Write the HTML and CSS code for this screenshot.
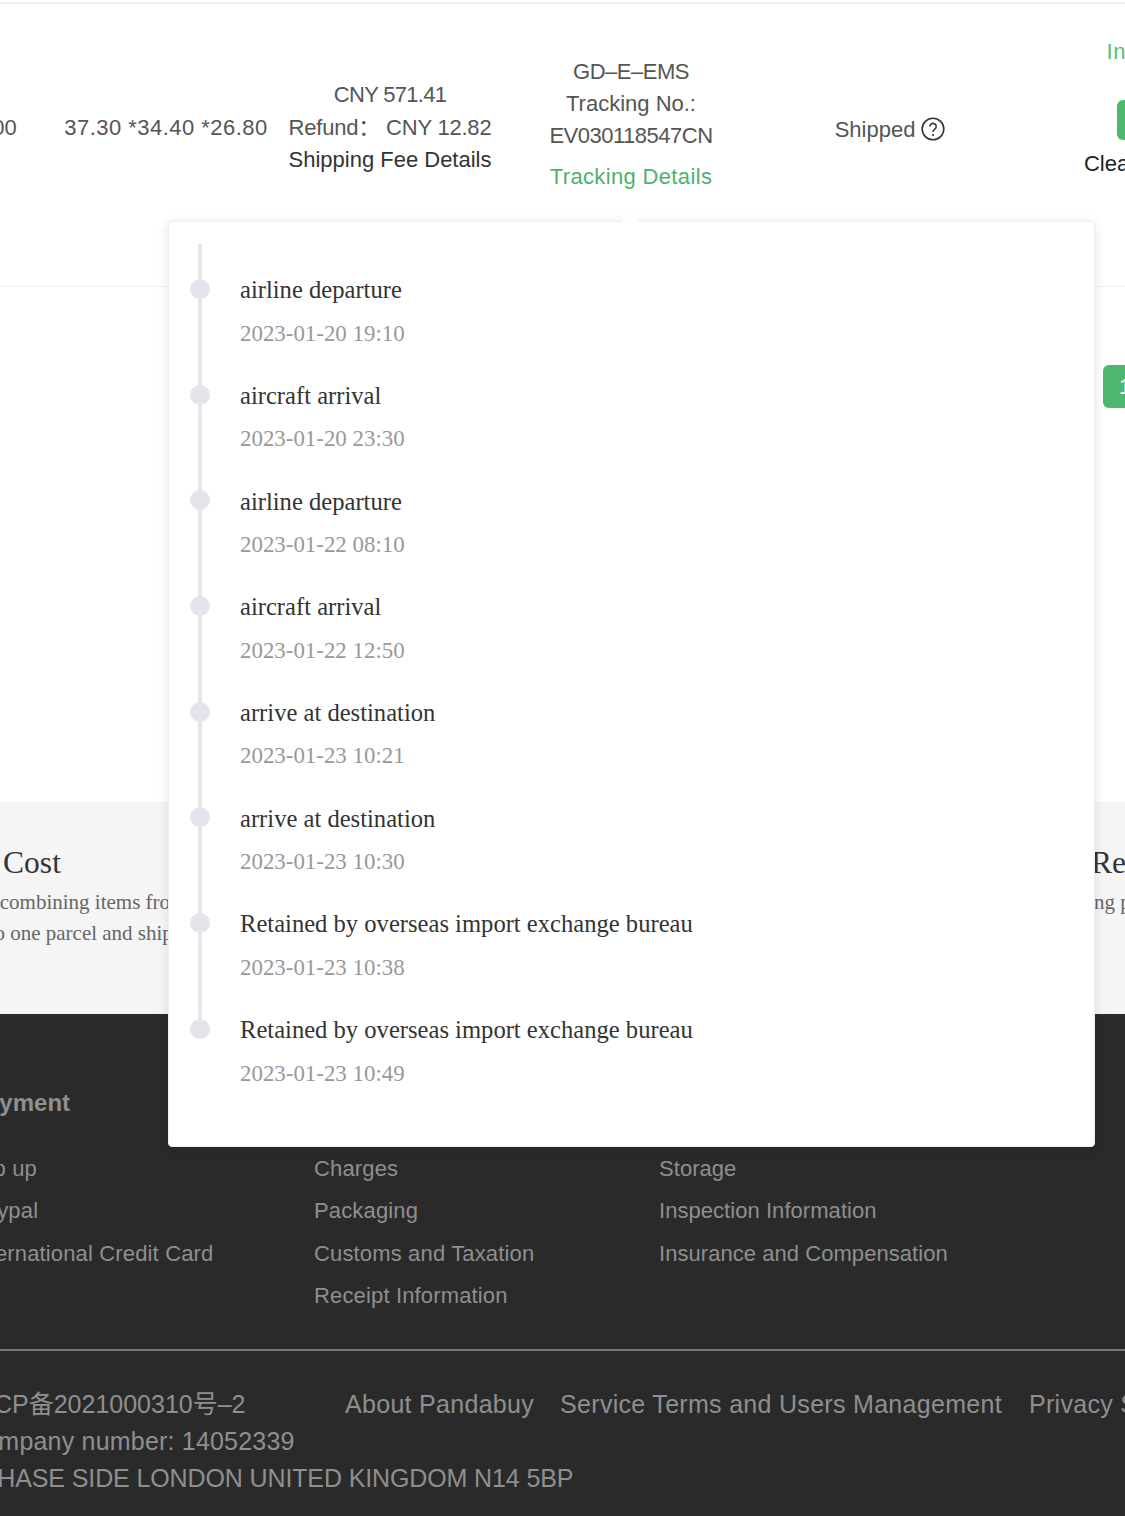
FILE: index.html
```html
<!DOCTYPE html>
<html lang="en">
<head>
    <meta charset="UTF-8">
    <title>Pandabuy parcel</title>
    <link rel="stylesheet" href="styles.css">
</head>
<body>
    <div class="page">
        <div class="parcel-row">
            <div class="cell cell-weight">1200.00</div>
            <div class="cell cell-size">37.30 *34.40 *26.80</div>
            <div class="cell cell-fee">
                <div class="fee-total">CNY 571.41</div>
                <div class="fee-refund">Refund： CNY 12.82</div>
                <div class="fee-link">Shipping Fee Details</div>
            </div>
            <div class="cell cell-track">
                <div class="track-code">GD–E–EMS</div>
                <div>Tracking No.:</div>
                <div class="track-code">EV030118547CN</div>
                <div class="track-link">Tracking Details</div>
            </div>
            <div class="cell cell-status">
                <span>Shipped</span>
                <svg class="help-icon" viewBox="0 0 24 24" width="24" height="24">
                    <circle cx="12" cy="12" r="10.8" fill="none" stroke="#333" stroke-width="1.6"/>
                    <path d="M8.8 9.6a3.2 3.2 0 1 1 5 2.6c-1.1.8-1.8 1.3-1.8 2.8" fill="none" stroke="#333" stroke-width="1.6"/>
                    <circle cx="12" cy="18" r="1.1" fill="#333"/>
                </svg>
            </div>
            <div class="cell cell-action">
                <div class="invoice-link">Invoices</div>
                <div class="action-btn">Pay</div>
                <div class="action-text">Clear Parcels</div>
            </div>
        </div>

        <div class="pager-area">
            <div class="pager-btn">1</div>
        </div>

        <div class="band">
            <div class="band-card">
                <h3 class="band-title">Save Cost</h3>
                <p class="band-line line-first">By combining items from different sellers</p>
                <p class="band-line line-second">Put into one parcel and ship them together</p>
            </div>
            <div class="band-card band-card-right">
                <h3 class="band-title">Reduce</h3>
                <p class="band-line line-right">Consolidating parcels</p>
            </div>
        </div>

        <div class="footer">
            <div class="footer-cols">
                <div class="footer-col col-pay">
                    <h4>Payment</h4>
                    <a>Top up</a>
                    <a>Paypal</a>
                    <a>International Credit Card</a>
                </div>
                <div class="footer-col col-ship">
                    <h4>Delivery</h4>
                    <a>Charges</a>
                    <a>Packaging</a>
                    <a>Customs and Taxation</a>
                    <a>Receipt Information</a>
                </div>
                <div class="footer-col col-after">
                    <h4>After-sales</h4>
                    <a>Storage</a>
                    <a>Inspection Information</a>
                    <a>Insurance and Compensation</a>
                </div>
            </div>
            <div class="footer-bottom">
                <div class="legal-row">
                    <span class="legal-icp">ICP备2021000310号–2</span>
                    <a class="legal-about">About Pandabuy</a>
                    <a class="legal-terms">Service Terms and Users Management</a>
                    <a>Privacy Statement</a>
                </div>
                <div class="legal-company">Company number: 14052339</div>
                <div class="legal-address">27 CHASE SIDE LONDON UNITED KINGDOM N14 5BP</div>
            </div>
        </div>

        <!-- tracking popover -->
        <div class="track-pop">
            <ul class="timeline">
                <li><div class="tl-title">airline departure</div><div class="tl-time">2023-01-20 19:10</div></li>
                <li><div class="tl-title">aircraft arrival</div><div class="tl-time">2023-01-20 23:30</div></li>
                <li><div class="tl-title">airline departure</div><div class="tl-time">2023-01-22 08:10</div></li>
                <li><div class="tl-title">aircraft arrival</div><div class="tl-time">2023-01-22 12:50</div></li>
                <li><div class="tl-title">arrive at destination</div><div class="tl-time">2023-01-23 10:21</div></li>
                <li><div class="tl-title">arrive at destination</div><div class="tl-time">2023-01-23 10:30</div></li>
                <li><div class="tl-title">Retained by overseas import exchange bureau</div><div class="tl-time">2023-01-23 10:38</div></li>
                <li><div class="tl-title">Retained by overseas import exchange bureau</div><div class="tl-time">2023-01-23 10:49</div></li>
            </ul>
        </div>
    </div>
</body>
</html>
```

FILE: styles.css
```css
html, body {
    margin: 0;
    padding: 0;
    background: #fff;
}
.page {
    position: relative;
    width: 1125px;
    height: 1516px;
    overflow: hidden;
    font-family: "Liberation Sans", Arial, "Noto Sans CJK SC", sans-serif;
    font-size: 22px;
    color: #555;
}
.parcel-row {
    display: flex;
    align-items: center;
    box-sizing: border-box;
    width: 1400px;
    height: 285px;
    margin-top: 2px;
    margin-left: -100px;
    padding-bottom: 36px;
    border-top: 2px solid #f2f2f2;
    border-bottom: 1px solid #f0f0f0;
    line-height: 32px;
    text-align: center;
    white-space: nowrap;
}
.cell {
    flex: none;
}
.cell-weight {
    width: 154px;
    margin-top: 2px;
}
.cell-size {
    width: 224px;
    margin-top: 2px;
    letter-spacing: 0.47px;
}
.cell-fee {
    width: 224px;
    margin-top: 2px;
    line-height: 32.5px;
}
.fee-total {
    letter-spacing: -0.7px;
}
.fee-refund {
    letter-spacing: -0.2px;
}
.fee-link {
    color: #333;
}
.cell-track {
    width: 258px;
    margin-top: -5px;
}
.track-code {
    letter-spacing: -0.5px;
}
.track-link {
    margin-top: 9px;
    color: #4fb06f;
    letter-spacing: 0.35px;
}
.cell-status {
    display: flex;
    justify-content: center;
    align-items: center;
    gap: 6px;
    width: 260px;
    margin-top: 5px;
}
.help-icon {
    margin-top: -2px;
}
.cell-action {
    width: 260px;
}
.invoice-link {
    color: #5cbb7c;
    margin-top: -39px;
    letter-spacing: 0.8px;
}
.action-btn {
    width: 66px;
    height: 40px;
    margin: 32px auto 8px;
    border-radius: 6px;
    background: #4fb86f;
    color: #fff;
    line-height: 40px;
}
.action-text {
    color: #222;
}
.pager-area {
    box-sizing: border-box;
    height: 515px;
    padding: 78px 0 0 1103px;
}
.pager-btn {
    width: 44px;
    height: 43px;
    border-radius: 6px;
    background: #4fb86f;
    color: #fff;
    line-height: 43px;
    text-align: center;
}
.band {
    position: relative;
    display: flex;
    justify-content: space-between;
    box-sizing: border-box;
    height: 212px;
    padding-top: 41px;
    background: #f5f5f5;
    font-family: "Liberation Serif", "Times New Roman", serif;
    white-space: nowrap;
}
.band-card {
    width: 200px;
    margin-left: -66px;
}
.band-card-right {
    width: 34px;
    margin-left: 0;
}
.band-title {
    margin: 0 0 4px;
    font-size: 31.5px;
    font-weight: normal;
    line-height: 40px;
    color: #333;
}
.band-line {
    margin: 0;
    font-size: 21px;
    line-height: 31px;
    color: #666;
}
.line-first {
    margin-left: 36px;
}
.line-second {
    margin-left: 5px;
}
.line-right {
    margin-left: -93.8px;
}
.footer {
    height: 502px;
    background: #2a2a2a;
    color: #8f8f8f;
    white-space: nowrap;
}
.footer-cols {
    display: flex;
    box-sizing: border-box;
    height: 335px;
    margin-left: -30px;
    padding-top: 72px;
}
.footer-col {
    display: flex;
    flex-direction: column;
    align-items: flex-start;
}
.col-pay {
    width: 344px;
}
.col-ship {
    width: 345px;
}
.footer-col h4 {
    margin: 0 0 28px;
    font-size: 24px;
    font-weight: 600;
    line-height: 34px;
    color: #8f8f8f;
}
.footer-col a {
    font-size: 22px;
    line-height: 42.3px;
    letter-spacing: 0.15px;
}
.col-after a {
    letter-spacing: 0.05px;
}
.footer-bottom {
    margin-left: -20px;
    padding-top: 35px;
    border-top: 2px solid #777;
    font-size: 25px;
    line-height: 37px;
}
.legal-row {
    display: flex;
}
.legal-row a {
    flex: none;
    letter-spacing: 0.3px;
}
.legal-icp {
    flex: none;
    width: 358px;
    margin-left: 7px;
}
.legal-about {
    margin-right: 26px;
}
.legal-terms {
    margin-right: 27px;
}
.legal-company {
    margin-left: -14px;
    letter-spacing: 0.2px;
}
.legal-address {
    margin-left: -35px;
    letter-spacing: -0.12px;
}
.track-pop {
    position: absolute;
    left: 168px;
    top: 221px;
    box-sizing: border-box;
    width: 927px;
    height: 926px;
    padding-top: 22px;
    border: 1px solid #ebeef5;
    border-radius: 4px;
    background: #fff;
    box-shadow: 0 2px 12px rgba(0, 0, 0, 0.1);
    font-family: "Liberation Serif", "Times New Roman", serif;
}
.track-pop::before {
    content: "";
    position: absolute;
    left: 454px;
    top: -6px;
    width: 14px;
    height: 14px;
    background: #fff;
    transform: rotate(45deg);
}
.timeline {
    margin: 0;
    padding: 0 0 0 71px;
    list-style: none;
}
.timeline li {
    position: relative;
    box-sizing: border-box;
    height: 105.7px;
    padding-top: 29.3px;
}
.timeline li::before {
    content: "";
    position: absolute;
    left: -42px;
    top: 0;
    bottom: 0;
    width: 4px;
    background: #e6e7ee;
}
.timeline li:last-child::before {
    bottom: 60px;
}
.timeline li::after {
    content: "";
    position: absolute;
    left: -50px;
    top: 35px;
    width: 20px;
    height: 20px;
    border-radius: 50%;
    background: #e4e5ec;
}
.tl-title {
    font-size: 24.6px;
    line-height: 34px;
    color: #333;
}
.tl-time {
    margin-top: 9.4px;
    font-size: 22.9px;
    line-height: 34px;
    color: #999;
}
```
